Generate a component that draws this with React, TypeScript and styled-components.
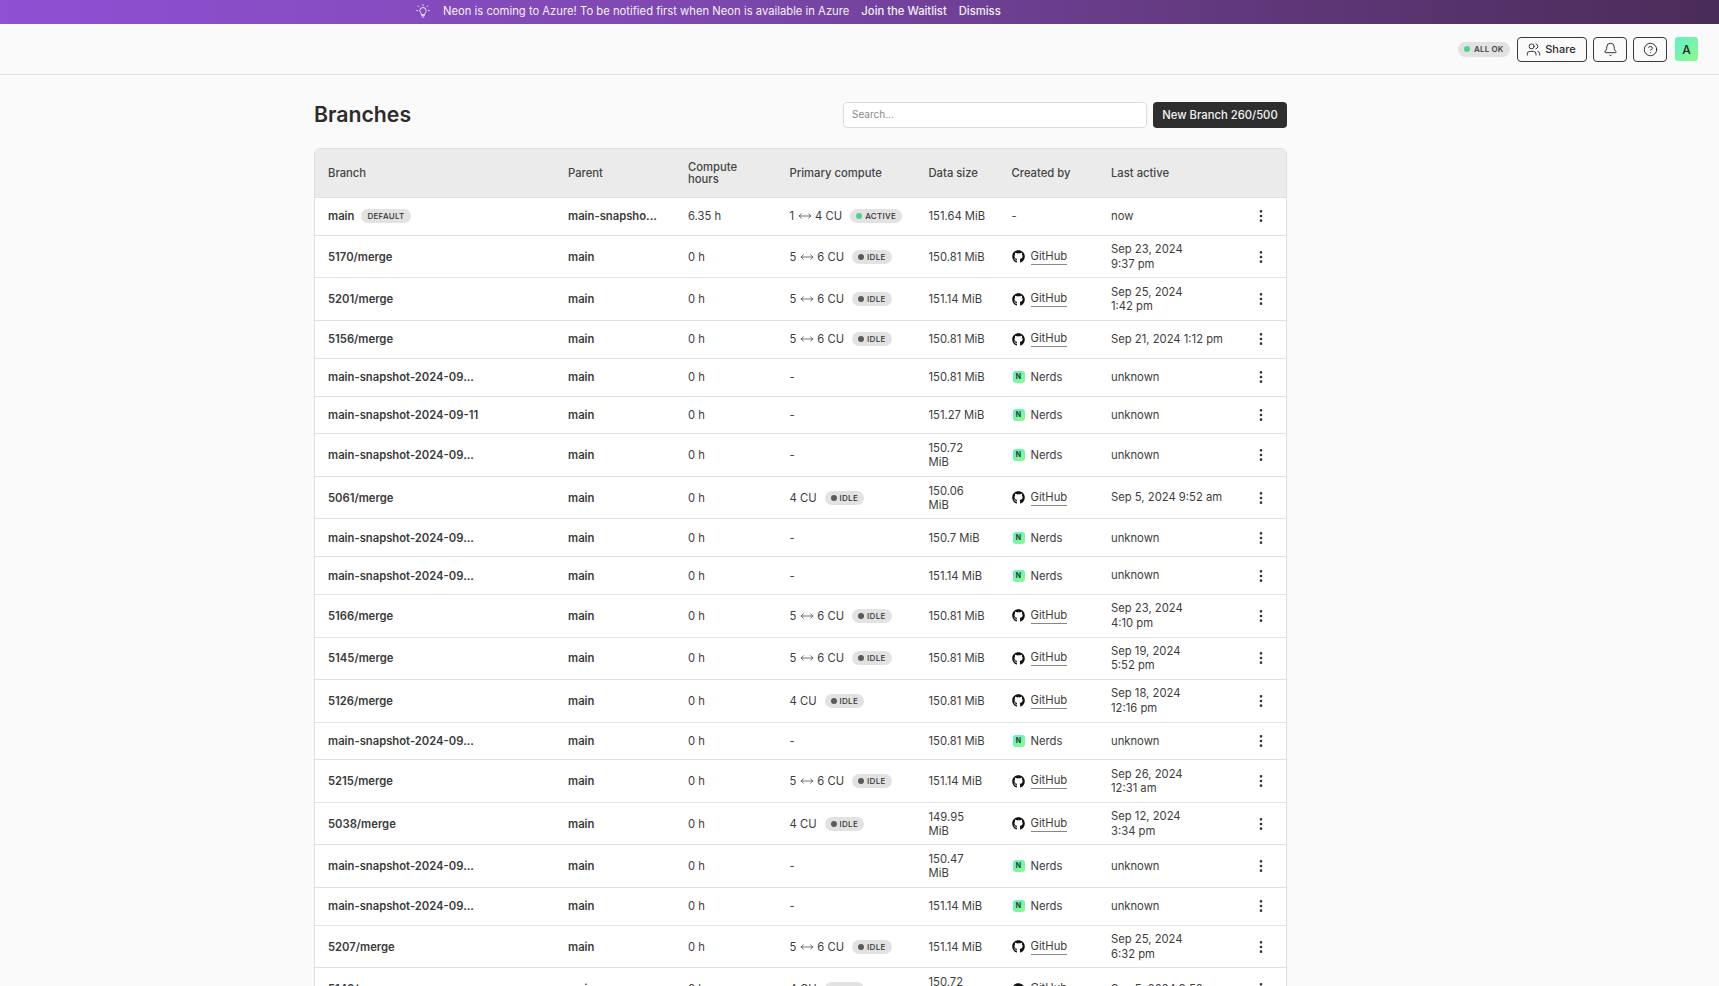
import React from "react";
import styled, { createGlobalStyle, css } from "styled-components";
import { Users, Bell, CircleHelp, MoveHorizontal, EllipsisVertical } from "lucide-react";
import { FaGithub } from "react-icons/fa";

type Row = {
  branch: string;
  badge?: boolean;
  parent: string;
  hours: string;
  min?: number;
  max?: number;
  state?: "active" | "idle";
  size: string;
  by: "github" | "nerds" | "none";
  last: string;
  last2?: string;
  tall?: boolean;
};

const snap = "main-snapshot-2024-09...";

const rows: Row[] = [
  { branch: "main", badge: true, parent: "main-snapsho...", hours: "6.35 h", min: 1, max: 4, state: "active", size: "151.64 MiB", by: "none", last: "now" },
  { branch: "5170/merge", parent: "main", hours: "0 h", min: 5, max: 6, state: "idle", size: "150.81 MiB", by: "github", last: "Sep 23, 2024", last2: "9:37 pm", tall: true },
  { branch: "5201/merge", parent: "main", hours: "0 h", min: 5, max: 6, state: "idle", size: "151.14 MiB", by: "github", last: "Sep 25, 2024", last2: "1:42 pm", tall: true },
  { branch: "5156/merge", parent: "main", hours: "0 h", min: 5, max: 6, state: "idle", size: "150.81 MiB", by: "github", last: "Sep 21, 2024 1:12 pm" },
  { branch: snap, parent: "main", hours: "0 h", size: "150.81 MiB", by: "nerds", last: "unknown" },
  { branch: "main-snapshot-2024-09-11", parent: "main", hours: "0 h", size: "151.27 MiB", by: "nerds", last: "unknown" },
  { branch: snap, parent: "main", hours: "0 h", size: "150.72 MiB", by: "nerds", last: "unknown", tall: true },
  { branch: "5061/merge", parent: "main", hours: "0 h", max: 4, state: "idle", size: "150.06 MiB", by: "github", last: "Sep 5, 2024 9:52 am", tall: true },
  { branch: snap, parent: "main", hours: "0 h", size: "150.7 MiB", by: "nerds", last: "unknown" },
  { branch: snap, parent: "main", hours: "0 h", size: "151.14 MiB", by: "nerds", last: "unknown" },
  { branch: "5166/merge", parent: "main", hours: "0 h", min: 5, max: 6, state: "idle", size: "150.81 MiB", by: "github", last: "Sep 23, 2024", last2: "4:10 pm", tall: true },
  { branch: "5145/merge", parent: "main", hours: "0 h", min: 5, max: 6, state: "idle", size: "150.81 MiB", by: "github", last: "Sep 19, 2024", last2: "5:52 pm", tall: true },
  { branch: "5126/merge", parent: "main", hours: "0 h", max: 4, state: "idle", size: "150.81 MiB", by: "github", last: "Sep 18, 2024", last2: "12:16 pm", tall: true },
  { branch: snap, parent: "main", hours: "0 h", size: "150.81 MiB", by: "nerds", last: "unknown" },
  { branch: "5215/merge", parent: "main", hours: "0 h", min: 5, max: 6, state: "idle", size: "151.14 MiB", by: "github", last: "Sep 26, 2024", last2: "12:31 am", tall: true },
  { branch: "5038/merge", parent: "main", hours: "0 h", max: 4, state: "idle", size: "149.95 MiB", by: "github", last: "Sep 12, 2024", last2: "3:34 pm", tall: true },
  { branch: snap, parent: "main", hours: "0 h", size: "150.47 MiB", by: "nerds", last: "unknown", tall: true },
  { branch: snap, parent: "main", hours: "0 h", size: "151.14 MiB", by: "nerds", last: "unknown" },
  { branch: "5207/merge", parent: "main", hours: "0 h", min: 5, max: 6, state: "idle", size: "151.14 MiB", by: "github", last: "Sep 25, 2024", last2: "6:32 pm", tall: true },
  { branch: "5142/merge", parent: "main", hours: "0 h", max: 4, state: "idle", size: "150.72 MiB", by: "github", last: "Sep 5, 2024 9:52 am", tall: true },
];

const BulbIcon = () => (
  <svg width="14" height="14" viewBox="0 0 14 14" fill="none" stroke="currentColor" strokeWidth="0.9" strokeLinecap="round">
    <path d="M5.4 10.2c0-1.2-1.5-1.7-1.5-3.6a3.1 3.1 0 0 1 6.2 0c0 1.9-1.5 2.4-1.5 3.6z" />
    <path d="M5.6 11.6h2.8M6.2 13h1.6" />
    <path d="M7 0.6v1M2 1.8l.7.7M12 1.8l-.7.7M0.7 6.6h1M12.3 6.6h1" />
  </svg>
);

const App = () => {
  return (
    <Page>
      <GlobalStyle />
      <Banner>
        <BulbIcon />
        <BannerText>Neon is coming to Azure! To be notified first when Neon is available in Azure</BannerText>
        <BannerLink>Join the Waitlist</BannerLink>
        <BannerLink>Dismiss</BannerLink>
      </Banner>
      <Header>
        <StatusPill>
          <Dot $color="#4fd18f" $size={6} />
          ALL OK
        </StatusPill>
        <OutlineButton>
          <Users size={15} strokeWidth={1.5} />
          Share
        </OutlineButton>
        <IconButton><Bell size={15} strokeWidth={1.5} /></IconButton>
        <IconButton><CircleHelp size={15} strokeWidth={1.5} /></IconButton>
        <Avatar>A</Avatar>
      </Header>
      <Main>
        <TitleRow>
          <Title>Branches</Title>
          <SearchInput placeholder="Search..." />
          <PrimaryButton>New Branch 260/500</PrimaryButton>
        </TitleRow>
        <Table>
          <HeadRow>
            <span>Branch</span>
            <span>Parent</span>
            <HoursHead>Compute hours</HoursHead>
            <span>Primary compute</span>
            <span>Data size</span>
            <span>Created by</span>
            <span>Last active</span>
          </HeadRow>
          {rows.map((r, i) => (
            <BodyRow key={i} $tall={r.tall}>
              <BranchCell>
                {r.branch}
                {r.badge && <Tag>DEFAULT</Tag>}
              </BranchCell>
              <ParentCell>{r.parent}</ParentCell>
              <span>{r.hours}</span>
              <ComputeCell>
                {r.max ? (
                  <>
                    {r.min && <>{r.min}<MoveHorizontal size={14} strokeWidth={1.25} /></>}
                    {r.max} CU
                    <StateTag>
                      <Dot $color={r.state === "active" ? "#4fd18f" : "#5a5a5a"} $size={6} />
                      {r.state === "active" ? "ACTIVE" : "IDLE"}
                    </StateTag>
                  </>
                ) : "-"}
              </ComputeCell>
              <SizeCell>{r.size}</SizeCell>
              <CreatorCell>
                {r.by === "none" && "-"}
                {r.by === "github" && <><FaGithub size={13} color="#111" /><CreatorLink>GitHub</CreatorLink></>}
                {r.by === "nerds" && <><OrgMark>N</OrgMark>Nerds</>}
              </CreatorCell>
              <LastCell>
                {r.last}
                {r.last2 && <><br />{r.last2}</>}
              </LastCell>
              <MenuCell><EllipsisVertical size={16} strokeWidth={2} /></MenuCell>
            </BodyRow>
          ))}
        </Table>
      </Main>
    </Page>
  );
};

const GlobalStyle = createGlobalStyle`
  html, body {
    margin: 0;
    height: 100%;
    overflow: hidden;
    background: #fafafa;
  }
  * {
    box-sizing: border-box;
  }
`;

const Page = styled.div`
  height: 986px;
  overflow: hidden;
  background: #fafafa;
  color: #3d3d3d;
  font-family: Inter, "Liberation Sans", sans-serif;
  font-size: 11.25px;
`;

const Banner = styled.div`
  height: 24px;
  padding: 0 0 2px 416px;
  display: flex;
  align-items: center;
  gap: 12px;
  background: linear-gradient(90deg, #9050d4 0%, #7e48b0 40%, #63397f 70%, #4a2c58 100%);
  color: #f5f0fa;
`;

const BannerText = styled.span`
  margin-left: 1px;
`;

const BannerLink = styled.span`
  font-weight: 500;
`;

const Header = styled.div`
  height: 51px;
  display: flex;
  align-items: center;
  justify-content: flex-end;
  gap: 6px;
  padding-right: 21px;
  border-bottom: 1px solid #e0e0e0;
`;

const StatusPill = styled.div`
  width: 52px;
  height: 15px;
  display: flex;
  align-items: center;
  gap: 4px;
  padding-left: 6px;
  margin-right: 1px;
  border-radius: 8px;
  background: #e2e2e2;
  color: #444;
  font-size: 8px;
  font-weight: 600;
  letter-spacing: 0.15px;
`;

const Dot = styled.i<{ $color: string; $size: number }>`
  display: inline-block;
  width: ${(p) => p.$size}px;
  height: ${(p) => p.$size}px;
  border-radius: 50%;
  background: ${(p) => p.$color};
  flex: none;
`;

const buttonBase = css`
  height: 25px;
  display: flex;
  align-items: center;
  justify-content: center;
  border: 1px solid #3a3a3a;
  border-radius: 4px;
  background: #fafafa;
  color: #2a2a2a;
  font-family: inherit;
`;

const OutlineButton = styled.button`
  ${buttonBase}
  width: 70px;
  gap: 4px;
  padding: 0 2px 0 0;
  font-size: 11px;
  font-weight: 500;
`;

const IconButton = styled.button`
  ${buttonBase}
  width: 34px;
  padding: 0;
`;

const Avatar = styled.div`
  width: 23px;
  height: 24px;
  margin-left: 2px;
  display: flex;
  align-items: center;
  justify-content: center;
  border-radius: 3px;
  background: linear-gradient(135deg, #62eecb, #8efb86);
  color: #222;
  font-size: 12px;
  font-weight: 500;
`;

const Main = styled.main`
  padding: 27px 432px 0 314px;
`;

const TitleRow = styled.div`
  height: 26px;
  display: flex;
  align-items: center;
  margin-bottom: 20px;
`;

const Title = styled.h1`
  margin: 0 auto 2px 0;
  font-size: 21.25px;
  font-weight: 600;
  color: #2c2c2c;
`;

const SearchInput = styled.input`
  width: 304px;
  height: 26px;
  padding: 0 8px 2px;
  border: 1px solid #dcdcdc;
  border-radius: 4px;
  background: #fff;
  font-family: inherit;
  font-size: 10px;
  outline: none;
  &::placeholder {
    color: #8a8a8a;
  }
`;

const PrimaryButton = styled.button`
  width: 134px;
  height: 26px;
  margin-left: 6px;
  padding: 0;
  border: 0;
  border-radius: 4px;
  background: #2e2e2e;
  color: #f5f5f5;
  font-family: inherit;
  font-size: 11.25px;
  font-weight: 500;
`;

const Table = styled.div`
  border: 1px solid #dedede;
  border-radius: 6px;
  overflow: hidden;
  background: #fff;
`;

const columns = "240px 120px 101.5px 139px 83px 99.5px 1fr";

const HeadRow = styled.div`
  height: 48px;
  display: grid;
  grid-template-columns: ${columns};
  align-items: center;
  padding: 0 50px 0 13px;
  background: #ebebeb;
  font-weight: 500;
  color: #444;
`;

const HoursHead = styled.span`
  width: 60px;
  line-height: 12px;
`;

const BodyRow = styled.div<{ $tall?: boolean }>`
  height: ${(p) => (p.$tall ? 42.5 : 37.85)}px;
  display: grid;
  grid-template-columns: ${columns} 50px;
  align-items: center;
  padding-left: 13px;
  border-top: 1px solid #e2e2e2;
  line-height: 14px;
`;

const BranchCell = styled.span`
  display: flex;
  align-items: center;
  gap: 7px;
  font-weight: 600;
  color: #3a3a3a;
`;

const Tag = styled.span`
  height: 14px;
  display: inline-flex;
  align-items: center;
  padding: 0 6px;
  border-radius: 7px;
  background: #e2e2e2;
  color: #333;
  font-size: 8px;
  font-weight: 500;
  letter-spacing: 0.3px;
`;

const ParentCell = styled.span`
  font-weight: 600;
  color: #3a3a3a;
`;

const ComputeCell = styled.span`
  display: flex;
  align-items: center;
  gap: 3.5px;
`;

const StateTag = styled(Tag)`
  gap: 3px;
  margin-left: 4.5px;
`;

const SizeCell = styled.span`
  width: 57px;
`;

const CreatorCell = styled.span`
  display: flex;
  align-items: center;
  gap: 6px;
`;

const CreatorLink = styled.span`
  padding-bottom: 1px;
  border-bottom: 1px solid #888;
`;

const OrgMark = styled.span`
  width: 12px;
  height: 12px;
  margin-left: 1px;
  display: flex;
  align-items: center;
  justify-content: center;
  border-radius: 3px;
  background: linear-gradient(135deg, #62eecb, #8efb86);
  color: #1d3b2c;
  font-size: 7px;
  font-weight: 700;
`;

const LastCell = styled.span`
  line-height: 14.5px;
`;

const MenuCell = styled.span`
  display: flex;
  justify-content: center;
  color: #333;
`;

export default App;
